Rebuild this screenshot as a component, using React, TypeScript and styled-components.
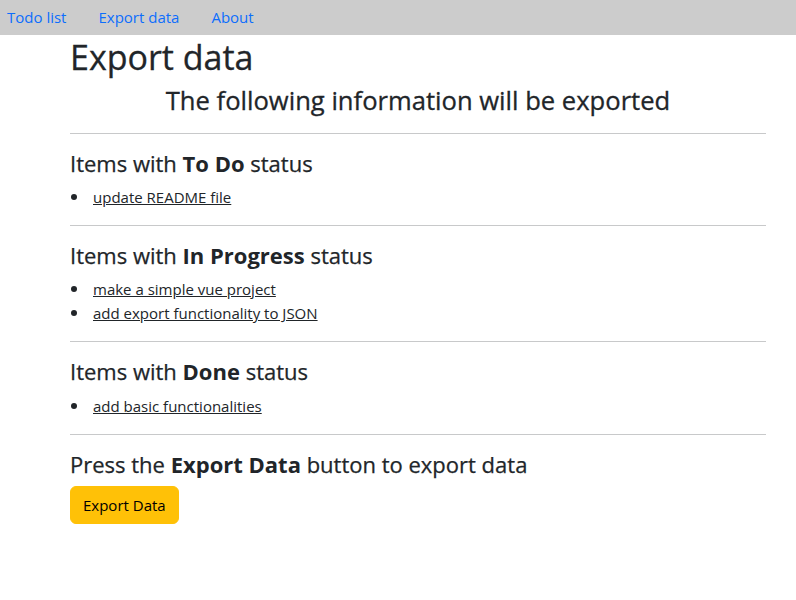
import React from "react";
import styled, { createGlobalStyle } from "styled-components";

const GlobalStyle = createGlobalStyle`
  body {
    margin: 0;
    font-family: "Open Sans", "Noto Sans", "Liberation Sans", sans-serif;
    font-size: 16px;
    line-height: 1.5;
    color: #212529;
    background: #fff;
  }
`;

type Item = { id: number; title: string };

const groups: { status: string; items: Item[] }[] = [
  { status: "To Do", items: [{ id: 1, title: "update README file" }] },
  {
    status: "In Progress",
    items: [
      { id: 2, title: "make a simple vue project" },
      { id: 3, title: "add export functionality to JSON" },
    ],
  },
  { status: "Done", items: [{ id: 4, title: "add basic functionalities" }] },
];

function App() {
  return (
    <>
      <GlobalStyle />
      <SNav>
        <SNavLink href="#">Todo list</SNavLink>
        <SNavLink href="#">Export data</SNavLink>
        <SNavLink href="#">About</SNavLink>
      </SNav>
      <SContainer>
        <STitle>Export data</STitle>
        <SSubtitle>The following information will be exported</SSubtitle>
        {groups.map((g) => (
          <SSection key={g.status}>
            <SRule />
            <SGroupTitle>
              Items with <b>{g.status}</b> status
            </SGroupTitle>
            <SList>
              {g.items.map((item) => (
                <SListItem key={item.id}>
                  <SItemLink href="#">{item.title}</SItemLink>
                </SListItem>
              ))}
            </SList>
          </SSection>
        ))}
        <SRule />
        <SGroupTitle>
          Press the <b>Export Data</b> button to export data
        </SGroupTitle>
        <SButton type="button">Export Data</SButton>
      </SContainer>
    </>
  );
}

const SNav = styled.nav`
  display: flex;
  align-items: center;
  gap: 32px;
  height: 35px;
  padding: 0 7px;
  background-color: #cccccc;
`;

const SNavLink = styled.a`
  color: #0d6efd;
  text-decoration: none;
  font-size: 15px;
`;

const SContainer = styled.main`
  width: 696px;
  padding: 2px 0 0 70px;
`;

const STitle = styled.h1`
  margin: 0 0 8px;
  font-size: 34px;
  font-weight: 500;
  line-height: 1.2;
  -webkit-text-stroke: 0.3px #212529;
`;

const SSubtitle = styled.h3`
  margin: 0;
  text-align: center;
  font-size: 25.6px;
  font-weight: 500;
  line-height: 1.2;
  -webkit-text-stroke: 0.3px #212529;
`;

const SSection = styled.section``;

const SRule = styled.hr`
  margin: 16px 0;
  border: 0;
  border-top: 1px solid #c8c9ca;
`;

const SGroupTitle = styled.h4`
  margin: 0 0 9px;
  font-size: 22px;
  font-weight: 500;
  line-height: 1.2;
  -webkit-text-stroke: 0.25px #212529;

  b {
    font-weight: 700;
    -webkit-text-stroke: 0;
  }
`;

const SList = styled.ul`
  margin: 0 0 16px;
  padding: 0;
  list-style: none;
  font-size: 15px;
  line-height: 24px;
`;

const SListItem = styled.li`
  position: relative;
  padding-left: 23px;

  &::before {
    content: "";
    position: absolute;
    left: 1px;
    top: 9px;
    width: 6px;
    height: 6px;
    border-radius: 50%;
    background: #212529;
  }
`;

const SItemLink = styled.a`
  color: #212529;
  text-decoration: underline;
`;

const SButton = styled.button`
  margin: 0;
  padding: 6px 12px;
  height: 38px;
  border: 1px solid #ffc107;
  border-radius: 6px;
  background-color: #ffc107;
  color: #000;
  font-family: inherit;
  font-size: 15px;
  cursor: pointer;
`;

export default App;
